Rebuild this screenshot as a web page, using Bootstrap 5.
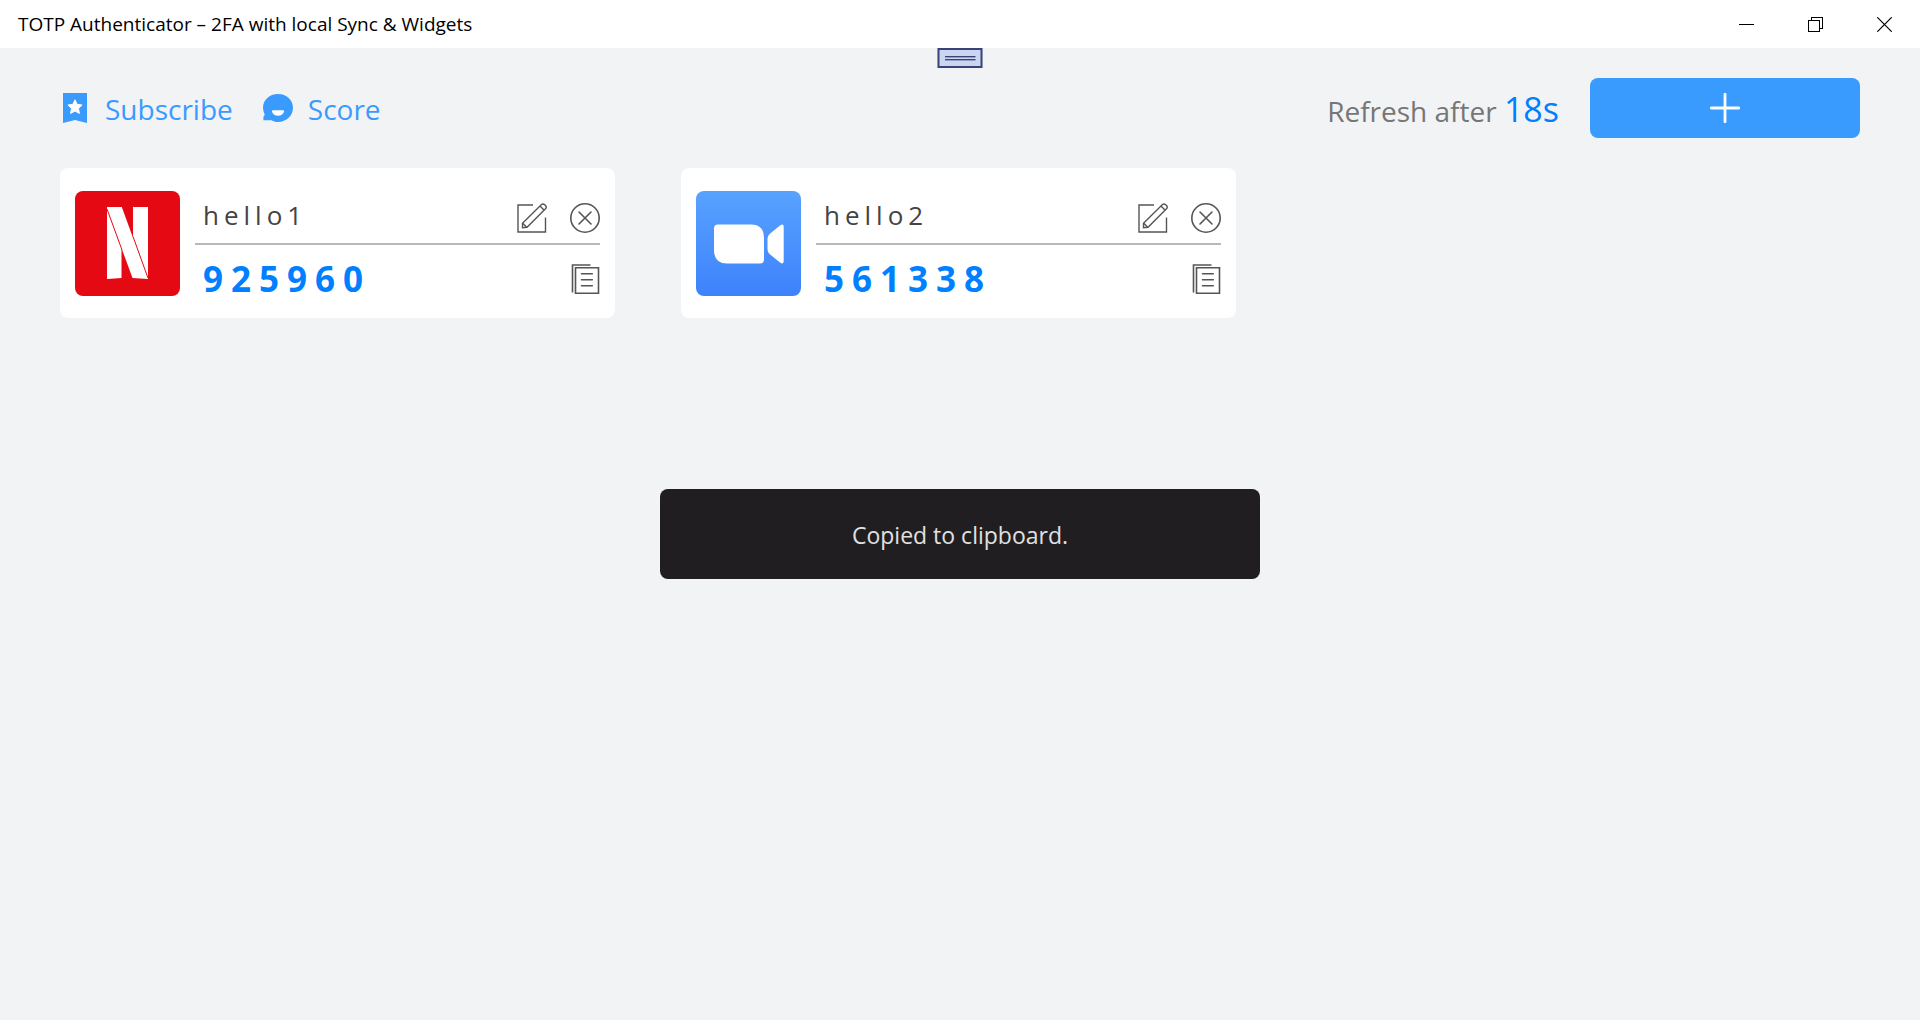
<!DOCTYPE html>
<html lang="en">
<head>
<meta charset="utf-8">
<meta name="viewport" content="width=device-width, initial-scale=1">
<title>TOTP Authenticator</title>
<link href="https://cdn.jsdelivr.net/npm/bootstrap@5.3.0/dist/css/bootstrap.min.css" rel="stylesheet">
<style>
  body { font-family: "Open Sans", "Noto Sans", sans-serif; background: #f2f3f5; color: #000; }
  svg { display: block; }
  .titlebar { height: 48px; padding: 0 1px 0 18px; font-size: 19px; }
  .win-btn { width: 69px; height: 48px; color: #000; }
  .toolbar { padding: 30px 60px; }
  .tool-nav { gap: 30px; }
  .tool-link { gap: 15px; color: #3a9bff; font-size: 28px; }
  .tool-link span { padding-top: 2px; line-height: 58px; }
  .countdown { color: #767676; font-size: 28px; line-height: 54px; padding: 6px 0 0; margin-right: 31px; }
  .countdown strong { color: #0080ff; font-size: 34px; font-weight: 400; line-height: 34px; }
  .add-btn { width: 270px; height: 60px; background: #3a9bff; border-radius: 8px; }
  .add-btn:hover { background: #2389f5; }
  .account-list { padding: 0 63px 30px 60px; }
  .account-list > .row { --bs-gutter-x: 66px; }
  .account { height: 150px; padding: 0 15px; gap: 15px; border-radius: 8px; }
  .logo-tile { width: 105px; height: 105px; border-radius: 8px; overflow: hidden; }
  .account-body { padding-top: 25px; height: 150px; }
  .account-name { height: 52px; gap: 23px; padding-left: 8px; border-bottom: 2px solid #b8b8b8; font-size: 26px; color: #444; }
  .account-name span { line-height: 44px; letter-spacing: 5px; }
  .account-code { height: 68px; padding-left: 8px; color: #0080ff; font-size: 35px; font-weight: 700; }
  .account-code output { line-height: 68px; letter-spacing: 8px; }
  .tool-handle { width: 45px; height: 20px; background: #ccd5ef; border: 2px solid #3a4377; }
  .notice { width: 600px; height: 90px; padding-top: 2px; background: #201e21; color: #e0e0e0; border-radius: 8px; font-size: 23px; }
</style>
<script src="https://cdn.jsdelivr.net/npm/bootstrap@5.3.0/dist/js/bootstrap.bundle.min.js"></script>
</head>
<body class="d-flex flex-column min-vh-100">
<svg width="0" height="0" class="position-absolute" aria-hidden="true">
  <symbol id="edit" viewBox="0 0 30 30"><g fill="none" stroke="#555" stroke-width="1.4">
    <path d="M16 2H1V29H28.500V14.500"/>
    <path d="M5.500 24.800V20.300L24.500 1.500Q26 .3 27.700 1.800L28.500 2.600Q30 4.200 28.500 5.800L10 24.300ZM5.700 20.300L10 24.600M23 3L27.200 7.200"/></g></symbol>
  <symbol id="remove" viewBox="0 0 30 30"><g fill="none" stroke="#555" stroke-width="1.6" stroke-linecap="round">
    <circle cx="15" cy="15" r="14.200"/><path d="M9 9L21 21M21 9L9 21"/></g></symbol>
  <symbol id="copy" viewBox="0 0 30 30"><g fill="none" stroke="#555" stroke-width="1.6">
    <path d="M20.500 1H2.500V28.500M5.500 3.700H28.500V29.200H5.500Z"/><path stroke-linecap="round" d="M11.500 9.800H22.300M11.500 15.800H22.300M11.500 21.800H22.300"/></g></symbol>
</svg>

<header class="titlebar bg-white d-flex align-items-center justify-content-between">
  <div>TOTP Authenticator – 2FA with local Sync &amp; Widgets</div>
  <div class="d-flex">
    <button type="button" class="win-btn btn border-0 rounded-0 p-0 d-flex align-items-center justify-content-center" aria-label="Minimize"><svg width="15" height="15" shape-rendering="crispEdges"><path d="M0 7.500H15" stroke="#000"/></svg></button>
    <button type="button" class="win-btn btn border-0 rounded-0 p-0 d-flex align-items-center justify-content-center" aria-label="Restore"><svg width="15" height="15" fill="none" stroke="#000" shape-rendering="crispEdges"><path d="M.5 3.500H11.500V14.500H.5ZM3.500 3.500V.5H14.500V11.500H11.500"/></svg></button>
    <button type="button" class="win-btn btn border-0 rounded-0 p-0 d-flex align-items-center justify-content-center" aria-label="Close"><svg width="15" height="15"><path d="M.3 .3L14.700 14.700M14.700 .3L.3 14.700" stroke="#000" stroke-width="1.200"/></svg></button>
  </div>
</header>

<main class="position-relative flex-grow-1">
  <button type="button" class="tool-handle position-absolute top-0 start-50 translate-middle-x p-0 d-flex align-items-center justify-content-center" aria-label="Toolbar"><svg width="31" height="5" shape-rendering="crispEdges"><path d="M0 .5H31M0 3.500H31" stroke="#3a4377"/><path d="M0 1.500H31M0 4.500H31" stroke="#949dc6"/></svg></button>

  <div class="toolbar d-flex align-items-center justify-content-between">
    <nav class="tool-nav d-flex align-items-center" aria-label="Actions">
      <a href="#" class="tool-link d-flex align-items-center text-decoration-none">
        <svg width="30" height="30"><path d="M3 0H27V30L15 27L3 30Z" fill="#3a9bff"/><path d="M15 6.800L17.200 11.400L22.100 12L18.500 15.500L19.400 20.400L15 18L10.600 20.400L11.500 15.500L7.900 12L12.800 11.400Z" fill="#fff" stroke="#fff" stroke-linejoin="round"/></svg>
        <span>Subscribe</span>
      </a>
      <a href="#" class="tool-link d-flex align-items-center text-decoration-none">
        <svg width="30" height="30"><path d="M15 1C23.500 1 30 7 30 14.800S23.500 29 15 29C12.500 29 10.500 28.400 8.500 27.200H.4V24.500Q.4 22.900 1.800 22Q0 18.500 0 14.800C0 7 6.500 1 15 1Z" fill="#3a9bff"/><path d="M10 17.200H20Q21.500 17.200 21 18.800Q19.500 22.800 15 22.800T9 18.800Q8.500 17.200 10 17.200Z" fill="#fff"/></svg>
        <span>Score</span>
      </a>
    </nav>
    <div class="d-flex align-items-center">
      <div class="countdown">Refresh after <strong>18s</strong></div>
      <button type="button" class="add-btn btn border-0 p-0 d-flex align-items-center justify-content-center" aria-label="Add account"><svg width="30" height="30"><path d="M15 1.200V28.800M1.200 15H28.800" stroke="#fff" stroke-width="2.800" stroke-linecap="round"/></svg></button>
    </div>
  </div>

  <section class="account-list" aria-label="Accounts">
    <div class="row row-cols-3">
      <div class="col">
        <article class="account bg-white d-flex align-items-center">
          <div class="logo-tile flex-shrink-0"><svg width="105" height="105" role="img" aria-label="Netflix"><path fill="#e50914" d="M0 0H105V105H0Z"/><path fill="#fff" d="M32 16H46.800L73 88L57.500 87L46.500 57V87L32 88ZM58 16H73V88L58 47Z"/><path d="M32 18L47 59M58 45.500L73 87" stroke="#e50914" stroke-width="1"/></svg></div>
          <div class="account-body flex-grow-1">
            <div class="account-name d-flex align-items-center">
              <span class="me-auto align-self-start">hello1</span>
              <button type="button" class="btn border-0 p-0" aria-label="Edit hello1"><svg width="30" height="30"><use href="#edit"/></svg></button>
              <button type="button" class="btn border-0 p-0" aria-label="Delete hello1"><svg width="30" height="30"><use href="#remove"/></svg></button>
            </div>
            <div class="account-code d-flex align-items-center justify-content-between">
              <output>925960</output>
              <button type="button" class="btn border-0 p-0" aria-label="Copy code for hello1"><svg width="30" height="30"><use href="#copy"/></svg></button>
            </div>
          </div>
        </article>
      </div>
      <div class="col">
        <article class="account bg-white d-flex align-items-center">
          <div class="logo-tile flex-shrink-0"><svg width="105" height="105" role="img" aria-label="Zoom"><defs><linearGradient id="sky" x2="0" y2="1"><stop stop-color="#58a2ff"/><stop offset="1" stop-color="#3e82fc"/></linearGradient></defs><path fill="url(#sky)" d="M0 0H105V105H0Z"/><path fill="#fff" d="M22 33.500H55Q68 33.500 68 47V68.500Q68 72.500 64 72.500H31Q18 72.500 18 59V37.500Q18 33.500 22 33.500ZM71.500 47.500Q71.500 45 73.500 43L84 34.500Q87.700 32 87.700 36V70Q87.700 74 84 71.500L73.500 63Q71.500 61 71.500 58.500Z"/></svg></div>
          <div class="account-body flex-grow-1">
            <div class="account-name d-flex align-items-center">
              <span class="me-auto align-self-start">hello2</span>
              <button type="button" class="btn border-0 p-0" aria-label="Edit hello2"><svg width="30" height="30"><use href="#edit"/></svg></button>
              <button type="button" class="btn border-0 p-0" aria-label="Delete hello2"><svg width="30" height="30"><use href="#remove"/></svg></button>
            </div>
            <div class="account-code d-flex align-items-center justify-content-between">
              <output>561338</output>
              <button type="button" class="btn border-0 p-0" aria-label="Copy code for hello2"><svg width="30" height="30"><use href="#copy"/></svg></button>
            </div>
          </div>
        </article>
      </div>
    </div>
  </section>

  <div class="notice position-absolute top-50 start-50 translate-middle d-flex align-items-center justify-content-center" role="status">Copied to clipboard.</div>
</main>
</body>
</html>
